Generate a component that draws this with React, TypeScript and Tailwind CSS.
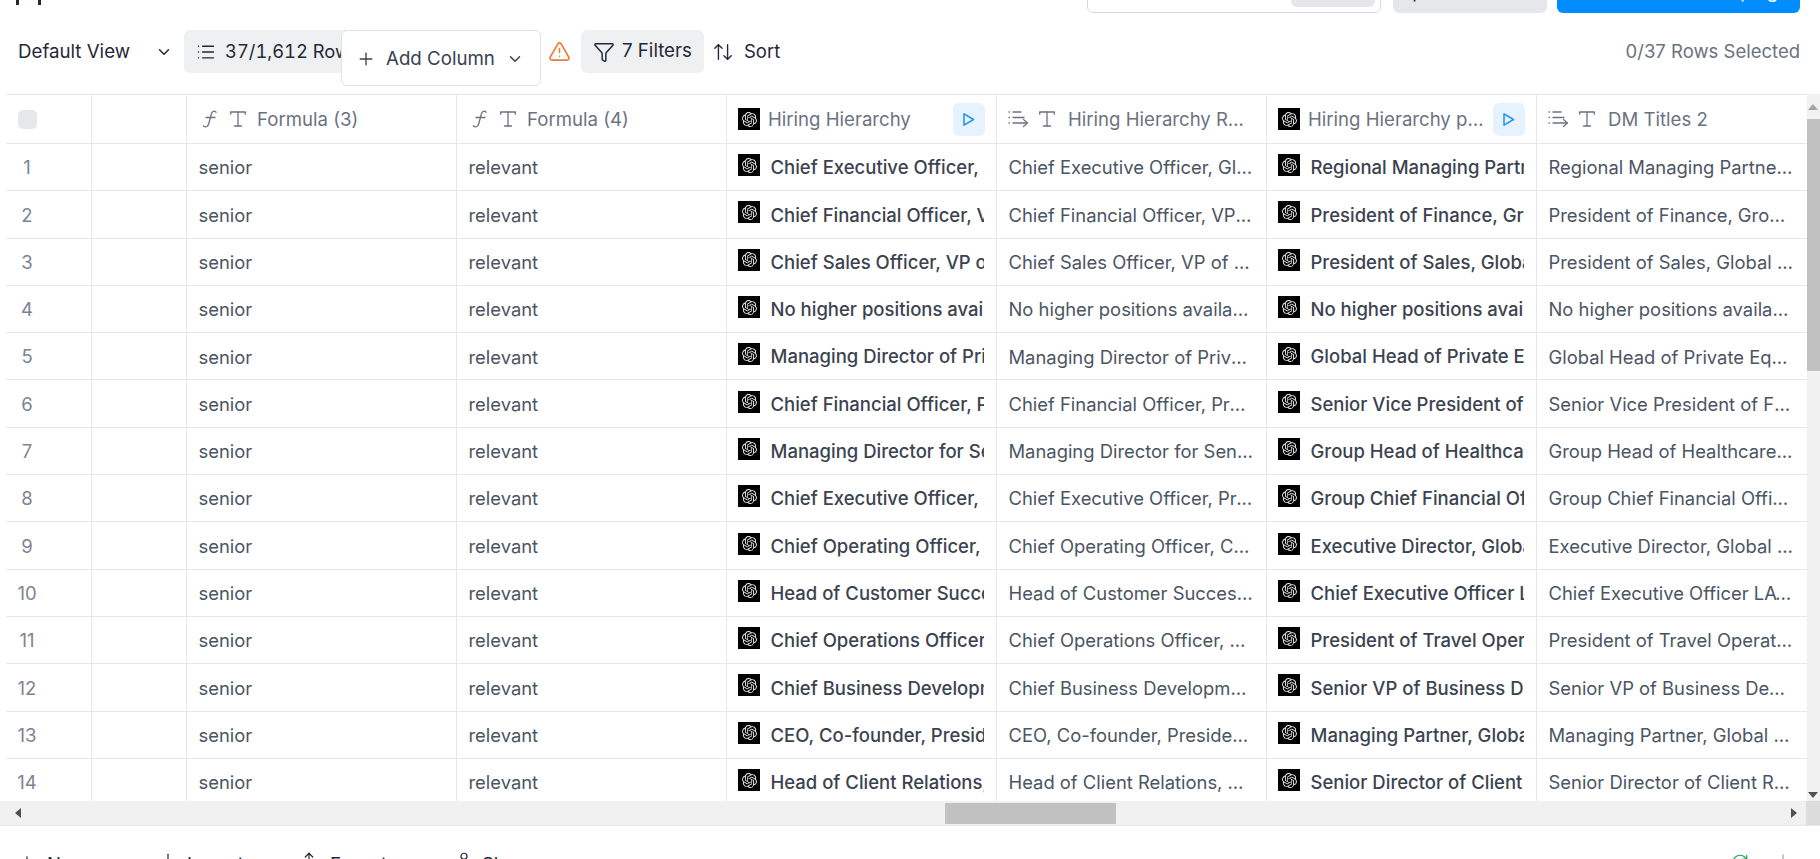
import React from "react";
import { ChevronDown, List, Plus, TriangleAlert, Funnel, ArrowUpDown, Search, Upload, Download, User, RefreshCw } from "lucide-react";
import { SiOpenai } from "react-icons/si";

const rows: [string, string][] = [
  ["Chief Executive Officer, Global Head of Sales", "Regional Managing Partner, Global Head"],
  ["Chief Financial Officer, VP of Finance", "President of Finance, Group Head of Finance"],
  ["Chief Sales Officer, VP of Sales and Marketing", "President of Sales, Global Head of Sales"],
  ["No higher positions available at this company", "No higher positions available at this company"],
  ["Managing Director of Private Equity", "Global Head of Private Equity"],
  ["Chief Financial Officer, President", "Senior Vice President of Finance"],
  ["Managing Director for Senior Care", "Group Head of Healthcare Services"],
  ["Chief Executive Officer, President", "Group Chief Financial Officer"],
  ["Chief Operating Officer, Chief of Staff", "Executive Director, Global Operations"],
  ["Head of Customer Success, VP", "Chief Executive Officer LATAM"],
  ["Chief Operations Officer, COO", "President of Travel Operations"],
  ["Chief Business Development Officer", "Senior VP of Business Development"],
  ["CEO, Co-founder, President and Chairman", "Managing Partner, Global Head"],
  ["Head of Client Relations, Director", "Senior Director of Client Relations"],
];

function AiIcon() {
  return (
    <span className="flex h-[22px] w-[22px] shrink-0 items-center justify-center bg-black">
      <SiOpenai className="h-[15px] w-[15px] text-[#e5e5e5]" />
    </span>
  );
}

function FnIcon() {
  return (
    <svg width="16" height="18" viewBox="0 0 16 18" fill="none" stroke="#6b7280" strokeWidth="1.3" strokeLinecap="round" className="shrink-0">
      <path d="M15 2.200c-.8-1-2-1.300-3-.7-1 .6-1.500 1.600-1.800 3L7.800 13.500c-.4 1.500-1 2.500-2 3-1 .5-2.500.3-3.300-.7" />
      <path d="M5 7.500h9" />
    </svg>
  );
}

function TIcon() {
  return (
    <svg width="16" height="16" viewBox="0 0 16 16" fill="none" stroke="#6b7280" strokeWidth="1.3" strokeLinecap="round" strokeLinejoin="round" className="shrink-0">
      <path d="M.7 3.200V1h14.600v2.200" />
      <path d="M8 1v14" />
      <path d="M4.500 15h7" />
    </svg>
  );
}

function FlowIcon() {
  return (
    <svg width="22" height="20" viewBox="0 0 22 20" fill="none" stroke="#6b7280" strokeWidth="1.300" strokeLinecap="round" strokeLinejoin="round" className="shrink-0">
      <path d="M1 3h.5M1 8.500h.5M1 14h.5" />
      <path d="M5 3h8M5 8.500h11M5 14h14" />
      <path d="M15.500 10.500l4 3.500-4 3.500" />
    </svg>
  );
}

function PlayButton() {
  return (
    <span className="flex h-[33px] w-[32px] shrink-0 items-center justify-center rounded-md bg-[#e6f3fe]">
      <svg width="13" height="15" viewBox="0 0 13 15" fill="none" stroke="#1d93f5" strokeWidth="1.500" strokeLinejoin="round">
        <path d="M2 1.800v11.400L11.500 7.500z" />
      </svg>
    </span>
  );
}

const cellBase = "flex shrink-0 items-center border-r border-[#e5e7eb]";
const wide = "w-[270px]";
const headText = "mt-[2px] text-[18.6px] text-[#6b7280] whitespace-nowrap";

function Head() {
  return (
    <div className="flex h-[50px] shrink-0 border-y border-[#e5e7eb]">
      <div className={`${cellBase} w-[86px] pl-3`}>
        <span className="h-[19px] w-[19px] rounded-[5px] bg-[#e5e7eb]" />
      </div>
      <div className={`${cellBase} w-[94.500px]`} />
      {["Formula (3)", "Formula (4)"].map((t) => (
        <div key={t} className={`${cellBase} ${wide} pl-[14.500px]`}>
          <FnIcon />
          <span className="ml-[13px]"><TIcon /></span>
          <span className={`${headText} ml-[11px]`}>{t}</span>
        </div>
      ))}
      <div className={`${cellBase} ${wide} pl-[11.500px] pr-[11px]`}>
        <AiIcon />
        <span className={`${headText} ml-[8px] min-w-0 flex-1 truncate`}>Hiring Hierarchy</span>
        <PlayButton />
      </div>
      <div className={`${cellBase} ${wide} pl-[11.500px] pr-[14px]`}>
        <FlowIcon />
        <span className="ml-[9px]"><TIcon /></span>
        <span className={`${headText} ml-[13px] truncate`}>Hiring Hierarchy Results</span>
      </div>
      <div className={`${cellBase} ${wide} pl-[11.500px] pr-[11px]`}>
        <AiIcon />
        <span className={`${headText} ml-[8px] mr-[8px] min-w-0 flex-1 truncate`}>Hiring Hierarchy prompt</span>
        <PlayButton />
      </div>
      <div className={`flex shrink-0 items-center ${wide} pl-[11.500px] pr-[14px]`}>
        <FlowIcon />
        <span className="ml-[9px]"><TIcon /></span>
        <span className={`${headText} ml-[13px] truncate`}>DM Titles 2</span>
      </div>
    </div>
  );
}

function Row({ n, a, b }: { n: number; a: string; b: string }) {
  const plain = "text-[18.4px] text-[#4b5563] whitespace-nowrap";
  const strong = "text-[18.5px] font-[450] text-[#3b4350] whitespace-nowrap overflow-hidden";
  return (
    <div className="flex h-[47.300px] shrink-0 border-b border-[#e5e7eb]">
      <div className={`${cellBase} w-[86px] pt-[2px] text-[18.5px] text-[#7c8493]`}>
        <span className="w-[42px] text-center">{n}</span>
      </div>
      <div className={`${cellBase} w-[94.500px]`} />
      <div className={`${cellBase} ${wide} pl-3 pt-[2px] ${plain}`}>senior</div>
      <div className={`${cellBase} ${wide} pl-3 pt-[2px] ${plain}`}>relevant</div>
      <div className={`${cellBase} ${wide} pl-[11.500px] pr-[12px] pt-[2px]`}>
        <span className="-mt-[6px]"><AiIcon /></span>
        <span className={`${strong} ml-[10.500px]`}>{a}</span>
      </div>
      <div className={`${cellBase} ${wide} px-3 pt-[2px]`}>
        <span className={`${plain} truncate`}>{a}</span>
      </div>
      <div className={`${cellBase} ${wide} pl-[11.500px] pr-[12px] pt-[2px]`}>
        <span className="-mt-[6px]"><AiIcon /></span>
        <span className={`${strong} ml-[10.500px]`}>{b}</span>
      </div>
      <div className={`flex shrink-0 items-center ${wide} px-3 pt-[2px]`}>
        <span className={`${plain} truncate`}>{b}</span>
      </div>
    </div>
  );
}

export default function App() {
  return (
    <div className="relative flex h-[859px] w-[1820px] flex-col overflow-hidden bg-white font-['Inter',sans-serif] text-[#1f2937]">
      {/* clipped top bar */}
      <div className="flex h-[13px] shrink-0 items-end overflow-hidden pl-[16px] pr-[20px]">
        <div className="flex h-[13px] items-end">
          <span className="mb-[8px] h-[20px] w-[25px] border-x-[3px] border-[#1f2937]" />
          <span className="mb-[9px] ml-[69px] whitespace-nowrap text-[18.5px] text-[#e5e7eb]">Hiring Hierarchy Outreach List</span>
        </div>
        <div className="ml-auto flex items-end">
          <div className="relative flex h-[40px] w-[294px] items-end overflow-hidden rounded-b-md border border-[#d8dae0] pb-[5px] pl-[5px] pr-[5px]">
            <Search size={18} className="mb-[6px] ml-[7px] text-[#374151]" />
            <span className="ml-auto h-[30px] w-[84px] rounded-md bg-[#e5e7eb]" />
          </div>
          <div className="ml-[12px] flex h-[40px] w-[154px] items-end rounded-b-md bg-[#e5e7eb] pb-[7px] pl-[5px] text-[18.5px] text-[#1f2937]">
            Options
          </div>
          <div className="ml-[10px] flex h-[40px] w-[243px] items-end justify-end rounded-b-md bg-[#008dff] pb-[7px] pr-[11px] text-[18.5px] text-white">
            Send to Campaign
          </div>
        </div>
      </div>

      {/* toolbar */}
      <div className="flex h-[81px] shrink-0 items-start pl-[18px] pr-[20px] pt-[17px]">
        <div className="flex h-[43px] w-[166px] items-center text-[18.7px] text-[#1f2937]">
          <span className="mt-[2px]">Default View</span>
          <ChevronDown size={18} strokeWidth={2} className="ml-auto mr-[11px]" />
        </div>
        <div className="flex h-[43px] w-[170px] items-center gap-[9px] overflow-hidden rounded-md bg-[#eff0f2] pl-[12px] text-[18.35px] whitespace-nowrap tabular-nums">
          <List size={20} strokeWidth={1.700} className="shrink-0" />
          <span>37/1,612 Rows</span>
        </div>
        <div className="ml-[227px] flex h-[43px] items-center gap-[7px] rounded-md bg-[#eff0f2] pl-[12px] pr-[12px] text-[18.7px]">
          <Funnel size={22} strokeWidth={1.600} />
          <span>7 Filters</span>
        </div>
        <div className="ml-[8px] flex h-[43px] items-center gap-[10px] text-[18.5px]">
          <ArrowUpDown size={22} strokeWidth={1.500} />
          <span>Sort</span>
        </div>
        <div className="ml-auto flex h-[43px] items-center text-[18.5px] text-[#6b7280]">0/37 Rows Selected</div>
      </div>

      {/* Add Column popover */}
      <div className="absolute left-[341px] top-[30px] flex h-[56px] w-[200px] items-center rounded-md border border-[#dfe1e6] bg-white pl-[14px] pt-[2px] text-[18.7px] text-[#374151]">
        <Plus size={20} strokeWidth={1.600} />
        <span className="ml-[10px] whitespace-nowrap">Add Column</span>
        <ChevronDown size={18} className="ml-[11px] shrink-0" />
      </div>
      <TriangleAlert size={23} strokeWidth={1.700} className="absolute left-[548px] top-[40px] text-[#ef7a3c]" />

      {/* table region */}
      <div className="flex h-[732px] shrink-0 flex-col border-b border-[#e5e7eb] pl-[6px]">
        <div className="flex h-[707px] shrink-0">
          <div className="flex w-[1800.500px] shrink-0 flex-col overflow-hidden">
            <Head />
            {rows.map(([a, b], i) => (
              <Row key={i} n={i + 1} a={a} b={b} />
            ))}
          </div>
          <div className="flex min-w-0 flex-1 flex-col items-center bg-[#f1f1f1]">
            <div className="flex h-[25px] shrink-0 items-center">
              <svg width="10" height="6" viewBox="0 0 10 6"><path d="M5 0l5 6H0z" fill="#a3a3a3" /></svg>
            </div>
            <div className="h-[252px] w-full shrink-0 bg-[#c1c1c1]" />
            <div className="mb-[3px] mt-auto">
              <svg width="10" height="6" viewBox="0 0 10 6"><path d="M0 0h10L5 6z" fill="#505050" /></svg>
            </div>
          </div>
        </div>
        <div className="-ml-[6px] flex h-[24px] shrink-0 items-center bg-[#f1f1f1]">
          <svg width="6" height="10" viewBox="0 0 6 10" className="ml-[15px]"><path d="M6 0v10L0 5z" fill="#505050" /></svg>
          <div className="ml-[924px] h-[21px] w-[171px] bg-[#c1c1c1]" />
          <svg width="6" height="10" viewBox="0 0 6 10" className="ml-[675px]"><path d="M0 0l6 5-6 5z" fill="#505050" /></svg>
          <div className="ml-auto h-full w-[14px] bg-[#dcdcdc]" />
        </div>
      </div>

      {/* clipped footer */}
      <div className="flex flex-1 overflow-hidden pl-[18px] pr-[28px] pt-[25px] text-[18.5px] text-[#1f2937]">
        <div className="flex w-[141px] shrink-0 items-start gap-[11px]"><Plus size={18} strokeWidth={1.600} className="mt-[2px]" /><span>New</span></div>
        <div className="flex w-[141px] shrink-0 items-start gap-[10px]"><Download size={18} strokeWidth={1.600} className="mt-[1px]" /><span>Import</span></div>
        <div className="flex w-[155px] shrink-0 items-start gap-[12px]"><Upload size={18} strokeWidth={1.600} /><span>Export</span></div>
        <div className="flex items-start gap-[9px]"><User size={18} strokeWidth={1.600} /><span>Share</span></div>
        <div className="ml-auto flex items-start gap-[25px]">
          <RefreshCw size={18} strokeWidth={1.600} className="mt-[2px] text-[#22a75a]" />
          <Plus size={18} strokeWidth={1.600} className="text-[#9ca3af]" />
        </div>
      </div>
    </div>
  );
}
